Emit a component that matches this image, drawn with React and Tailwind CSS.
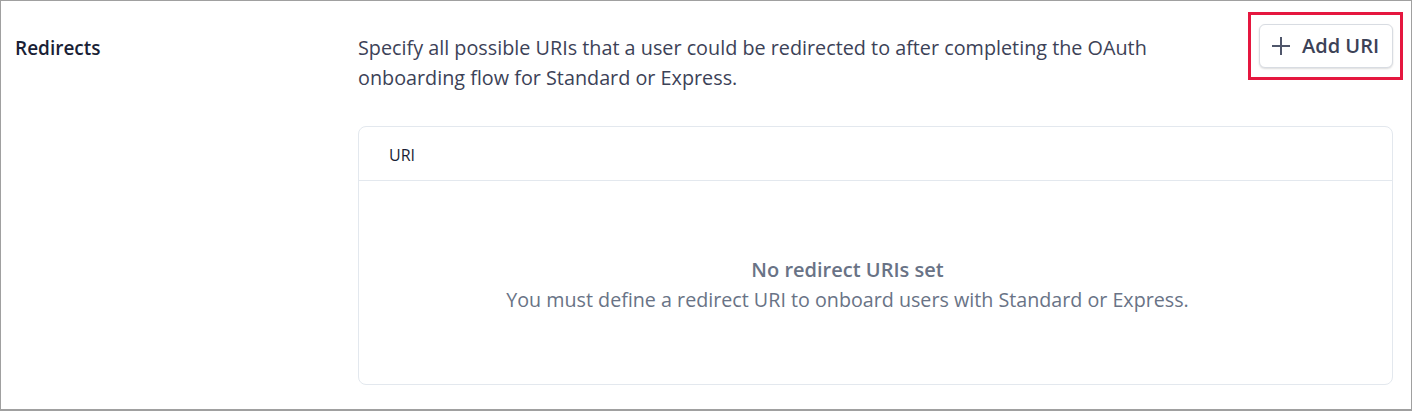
export default function App() {
  return (
    <div
      className="w-[1412px] h-[411px] border border-b-2 border-[#a0a0a0] bg-white text-[#3c4257] overflow-hidden"
      style={{ fontFamily: '"Open Sans", "Noto Sans", sans-serif' }}
    >
      <div className="flex pt-[23px] pl-[14px] pr-[18px]">
        <div className="w-[343px] shrink-0 pt-[9px]">
          <h2 className="text-[19px] leading-[30px] font-semibold text-[#1a1f36]">Redirects</h2>
        </div>

        <div className="flex-1">
          <div className="flex items-start justify-between">
            <p className="mt-[9px] w-[850px] text-[19.8px] leading-[30px] text-[#3c4257]">
              Specify all possible URIs that a user could be redirected to after completing the OAuth
              onboarding flow for Standard or Express.
            </p>
            <div className="relative">
              <span className="absolute -top-[12px] -bottom-[12px] -left-[11px] -right-[10px] border-[3px] border-[#e5173f] pointer-events-none" />
              <button className="flex items-center gap-[12px] h-[44px] w-[134px] pl-[12px] rounded-[6px] border border-[#d8dce2] bg-white shadow-[0_1px_2px_rgba(0,0,0,0.14)] text-[20px] font-semibold text-[#3c4257]">
                <svg width="18" height="18" viewBox="0 0 18 18" fill="none" stroke="#4f566b" strokeWidth="2">
                  <path d="M9 0v18M0 9h18" />
                </svg>
                <span>Add URI</span>
              </button>
            </div>
          </div>

          <div className="mt-[33px] h-[259px] rounded-[8px] border border-[#e3e8ee] flex flex-col">
            <div className="h-[54px] border-b border-[#e3e8ee] flex items-center pl-[30px] pt-[3px]">
              <span className="text-[16px] font-medium text-[#1a1f36]">URI</span>
            </div>
            <div className="flex-1 flex flex-col items-center justify-center pr-[56px] pt-[4px] text-[#697386]">
              <p className="text-[20px] leading-[30px] font-semibold">No redirect URIs set</p>
              <p className="text-[19.7px] leading-[30px]">
                You must define a redirect URI to onboard users with Standard or Express.
              </p>
            </div>
          </div>
        </div>
      </div>
    </div>
  )
}
